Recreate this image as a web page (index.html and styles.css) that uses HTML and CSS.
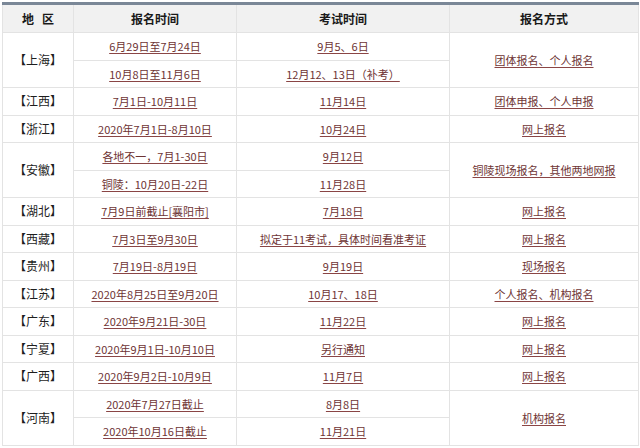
FILE: index.html
```html
<!DOCTYPE html>
<html lang="zh-CN">
<head>
<meta charset="utf-8">
<title>报名时间</title>
<link rel="stylesheet" href="styles.css">
</head>
<body>
<table class="exam">
  <colgroup>
    <col class="c-region"><col class="c-reg"><col class="c-exam"><col class="c-way">
  </colgroup>
  <thead>
    <tr><th>地&nbsp;&nbsp;&nbsp;区</th><th>报名时间</th><th>考试时间</th><th>报名方式</th></tr>
  </thead>
  <tbody>
    <tr><td class="prov" rowspan="2">【上海】</td><td><a>6月29日至7月24日</a></td><td><a>9月5、6日</a></td><td rowspan="2"><a>团体报名、个人报名</a></td></tr>
    <tr><td><a>10月8日至11月6日</a></td><td><a>12月12、13日（补考）</a></td></tr>
    <tr><td class="prov">【江西】</td><td><a>7月1日-10月11日</a></td><td><a>11月14日</a></td><td><a>团体申报、个人申报</a></td></tr>
    <tr><td class="prov">【浙江】</td><td><a>2020年7月1日-8月10日</a></td><td><a>10月24日</a></td><td><a>网上报名</a></td></tr>
    <tr><td class="prov" rowspan="2">【安徽】</td><td><a>各地不一，7月1-30日</a></td><td><a>9月12日</a></td><td rowspan="2"><a>铜陵现场报名，其他两地网报</a></td></tr>
    <tr><td><a>铜陵：10月20日-22日</a></td><td><a>11月28日</a></td></tr>
    <tr><td class="prov">【湖北】</td><td><a>7月9日前截止[襄阳市]</a></td><td><a>7月18日</a></td><td><a>网上报名</a></td></tr>
    <tr><td class="prov">【西藏】</td><td><a>7月3日至9月30日</a></td><td><a>拟定于11考试，具体时间看准考证</a></td><td><a>网上报名</a></td></tr>
    <tr><td class="prov">【贵州】</td><td><a>7月19日-8月19日</a></td><td><a>9月19日</a></td><td><a>现场报名</a></td></tr>
    <tr><td class="prov">【江苏】</td><td><a>2020年8月25日至9月20日</a></td><td><a>10月17、18日</a></td><td><a>个人报名、机构报名</a></td></tr>
    <tr><td class="prov">【广东】</td><td><a>2020年9月21日-30日</a></td><td><a>11月22日</a></td><td><a>网上报名</a></td></tr>
    <tr><td class="prov">【宁夏】</td><td><a>2020年9月1日-10月10日</a></td><td><a>另行通知</a></td><td><a>网上报名</a></td></tr>
    <tr><td class="prov">【广西】</td><td><a>2020年9月2日-10月9日</a></td><td><a>11月7日</a></td><td><a>网上报名</a></td></tr>
    <tr><td class="prov" rowspan="2">【河南】</td><td><a>2020年7月27日截止</a></td><td><a>8月8日</a></td><td rowspan="2"><a>机构报名</a></td></tr>
    <tr><td><a>2020年10月16日截止</a></td><td><a>11月21日</a></td></tr>
  </tbody>
</table>
</body>
</html>
```

FILE: styles.css
```css
html, body {
  margin: 0;
  padding: 0;
  background: #ffffff;
}
body {
  padding: 2px 2px 0 2px;
  font-family: "Noto Sans CJK SC", "Liberation Sans", sans-serif;
}
.exam {
  width: 636px;
  border-collapse: collapse;
  table-layout: fixed;
  border-top: 3px solid #7a8797;
}
.c-region { width: 71px; }
.c-reg { width: 163px; }
.c-exam { width: 213px; }
.c-way { width: 189px; }
.exam th {
  height: 27px;
  padding: 0;
  background: #f1f1f1;
  color: #1a1a1a;
  font-size: 12px;
  font-weight: bold;
  text-align: center;
  border: 1px solid #e3e3e3;
  border-top: none;
}
.exam td {
  height: 26.5px;
  padding: 0;
  text-align: center;
  font-size: 11px;
  border: 1px solid #e3e3e3;
  line-height: 14px;
}
.exam td a {
  color: #6e3434;
  text-decoration: underline;
  text-decoration-color: #8a4545;
  text-underline-offset: 2px;
}
.exam td.prov {
  color: #1e1e1e;
  font-size: 12px;
}
```
